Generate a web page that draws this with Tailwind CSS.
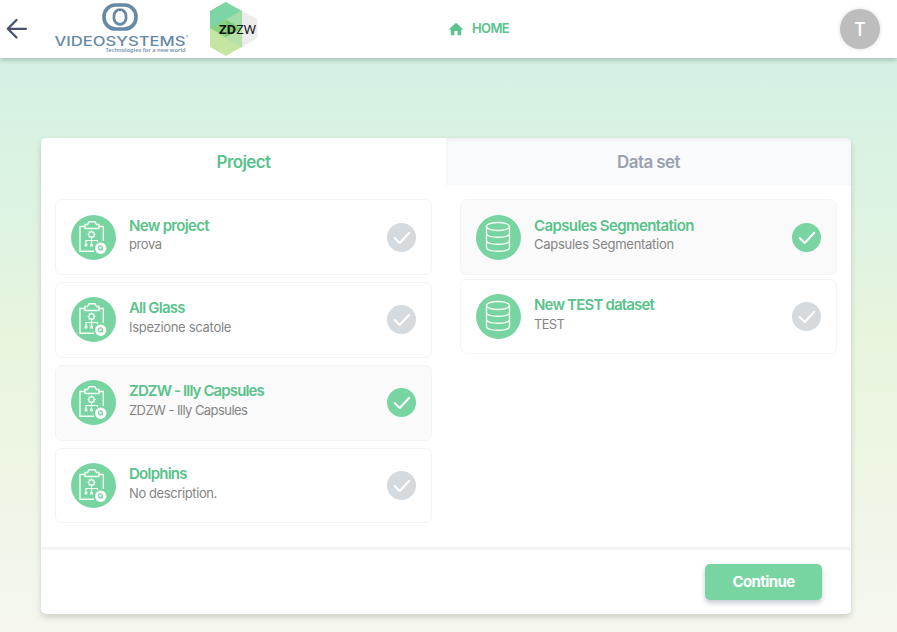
<!DOCTYPE html>
<html lang="en">
<head>
<meta charset="utf-8">
<title>Projects</title>
<script src="https://cdn.jsdelivr.net/npm/@tailwindcss/browser@4"></script>
</head>
<body class="h-[632px] overflow-hidden bg-[linear-gradient(180deg,#d4f1e3_50px,#dcf3e2_190px,#e8f5df_340px,#eef6e4_460px,#f1f6ea_550px,#f5f7ee_632px)] font-['Inter','Liberation_Sans',sans-serif]">
<svg class="hidden">
  <symbol id="clip" viewBox="0 0 45 45">
    <circle cx="22.5" cy="22.5" r="22.5" fill="#78d4a1"/>
    <g fill="none" stroke="#f3fff5" stroke-width="1.4">
      <path d="M14 11.500H9V36.300H23M27 11.500H32.300V26"/>
      <path d="M14 13.500V9.500H16.500L18 6.800H24L25.500 9.500H28V13.500Z"/>
      <circle cx="20.500" cy="19.500" r="2.700" stroke-width="1.300"/>
      <path d="M20.500 15.500V17M20.500 22V30M16.500 19.500H18M23 19.500H24.500M17.700 16.700L18.700 17.700M23.300 16.700L22.300 17.700M17.700 22.300L18.700 21.300M23.300 22.300L22.300 21.300M15 30V25.500H26.500V27" stroke-width="1.200"/>
    </g>
    <path d="M13.600 28.800H16.400V31.500H13.600ZM19.200 28.800H22V31.500H19.200Z" fill="#f3fff5"/>
    <circle cx="29.700" cy="33.200" r="5.700" fill="#fff"/>
    <circle cx="29.500" cy="32.800" r="2" fill="none" stroke="#78d4a1" stroke-width="1.200"/>
    <path d="M30.500 33.500L32 35.300" stroke="#78d4a1" stroke-width="1.200"/>
  </symbol>
  <symbol id="db" viewBox="0 0 45 45">
    <circle cx="22.500" cy="22.500" r="22.500" fill="#78d4a1"/>
    <g fill="none" stroke="#f3fff5" stroke-width="1.300">
      <ellipse cx="22" cy="11.500" rx="11.500" ry="4"/>
      <path d="M10.500 11.500V32.500C10.500 37.500 33.500 37.500 33.500 32.500V11.500M10.500 18.500C10.500 23.500 33.500 23.500 33.500 18.500M10.500 25.500C10.500 30.500 33.500 30.500 33.500 25.500"/>
    </g>
  </symbol>
  <symbol id="tick" viewBox="0 0 29 29">
    <circle cx="14.500" cy="14.500" r="14.500" fill="currentColor"/>
    <path d="M7.700 15L12.700 20L22.300 9.700" fill="none" stroke="#fff" stroke-width="2" stroke-linecap="round" stroke-linejoin="round"/>
  </symbol>
</svg>
<header class="relative flex h-[58px] items-start bg-white shadow-[0_2px_5px_rgba(0,0,0,0.22)]">
  <svg class="ml-[6px] mt-[18px] size-[22px]" viewBox="0 0 22 22" fill="none" stroke="#47526a" stroke-width="2.300" stroke-linecap="round" stroke-linejoin="round"><path d="M20 10.800H2M10.500 2L1.800 10.800L10.500 19.500"/></svg>
  <svg class="ml-[24px] h-[58px] w-[140px] overflow-visible" viewBox="52 0 140 58">
    <rect x="104" y="5" width="32" height="24" rx="11.500" fill="none" stroke="#6689a5" stroke-width="3.600"/>
    <rect x="114" y="9.700" width="12" height="14.600" rx="6" fill="none" stroke="#6689a5" stroke-width="2.800"/>
    <text x="54.500" y="45.800" font-family="Inter" font-size="12.500" font-weight="500" fill="#6689a5" textLength="131" lengthAdjust="spacingAndGlyphs">VIDEOSYSTEMS</text>
    <text x="186" y="38" font-family="Inter" font-size="3" fill="#6689a5">®</text>
    <text x="105.500" y="52.300" font-family="Noto Sans" font-size="6" font-weight="600" fill="#7893ac" textLength="80" lengthAdjust="spacingAndGlyphs">Technologies for a new world</text>
  </svg>
  <svg class="ml-[16px] h-[58px] w-[52px]" viewBox="208 0 52 58">
    <path d="M241.500 10.500L257.300 19.500V38L241.500 47.500L225.500 38V19.500Z" fill="#ececec"/>
    <path d="M225.800 2L241.700 11V47L225.800 56L210 47V11Z" fill="#c5e6a2"/>
    <path d="M225.800 2L241.700 11V38L210 28V11Z" fill="#7bd5a5"/>
    <path d="M210 28L225.800 19.500V37.500Z" fill="#88d283"/>
    <path d="M225.800 19.500L241.700 10.500V47L225.800 38Z" fill="#a4dda8"/>
    <path d="M225.800 19.500L241.700 28.500L225.800 37.500Z" fill="#7ecb76"/>
    <path d="M225.800 37.500L241.700 28.500V47Z" fill="#b8e1a8"/>
    <text x="219" y="33.500" font-family="Noto Sans" font-size="13" fill="#111" textLength="37" lengthAdjust="spacingAndGlyphs"><tspan font-weight="700">ZD</tspan>ZW</text>
  </svg>
  <div class="ml-[188px] mt-[20px] flex h-[18px] items-center text-[#5ac28c]">
    <svg class="h-[14px] w-[16px]" viewBox="0 0 16 14" fill="currentColor"><path d="M8 .8L15.300 7.500H13.200V13.300H9.600V9H6.400V13.300H2.800V7.500H.7Z"/></svg>
    <span class="ml-[8px] text-[13px] font-semibold tracking-[-0.65px]">HOME</span>
  </div>
  <div class="ml-auto mr-[17px] mt-[9px] flex size-[40px] items-center justify-center rounded-full bg-[#bdbdbd] text-[18px] font-medium text-white shadow-[0_0_4px_rgba(0,0,0,0.15)]">T</div>
</header>
<main class="ml-[41px] mt-[80px] flex h-[476px] w-[810px] flex-col overflow-hidden rounded-[5px] bg-white shadow-[0_3px_6px_rgba(0,0,0,0.16)]">
  <div class="flex h-[47px] shrink-0 text-center text-[17px] font-semibold leading-[48px] tracking-[-0.6px]">
    <div class="w-[405px] text-[#5ac28c]">Project</div>
    <div class="w-[405px] bg-[#f8fafc] text-[#9ba1b0] shadow-[inset_0_2px_4px_rgba(0,0,0,0.05)]">Data set</div>
  </div>
  <div class="flex h-[362px] gap-[28px] px-[14px] pt-[14px]">
    <section class="flex w-[377px] flex-col gap-[7px]">
      <article class="flex h-[76px] items-center rounded-[7px] border border-[#f3f4f6] px-[15px]">
        <svg class="size-[45px]"><use href="#clip"/></svg>
        <div class="ml-[13px] flex-1 pb-[6px]"><h2 class="text-[15px] font-semibold leading-[19px] tracking-[-0.68px] text-[#5ac28c]">New project</h2><p class="text-[13px] leading-[18px] tracking-[-0.4px] text-[#858585]">prova</p></div>
        <svg class="size-[29px] text-[#d5dade]"><use href="#tick"/></svg>
      </article>
      <article class="flex h-[76px] items-center rounded-[7px] border border-[#f3f4f6] px-[15px] pb-[2px]">
        <svg class="size-[45px]"><use href="#clip"/></svg>
        <div class="ml-[13px] flex-1 pb-[2px]"><h2 class="text-[15px] font-semibold leading-[19px] tracking-[-0.8px] text-[#5ac28c]">All Glass</h2><p class="text-[13px] leading-[21px] tracking-[-0.3px] text-[#858585]">Ispezione scatole</p></div>
        <svg class="size-[29px] text-[#d5dade]"><use href="#tick"/></svg>
      </article>
      <article class="flex h-[76px] items-center rounded-[7px] border border-[#f3f4f6] bg-[#fafafa] px-[15px] pb-[2px]">
        <svg class="size-[45px]"><use href="#clip"/></svg>
        <div class="ml-[13px] flex-1 pb-[2px]"><h2 class="text-[15px] font-semibold leading-[19px] tracking-[-0.88px] text-[#5ac28c]">ZDZW - Illy Capsules</h2><p class="text-[13px] leading-[21px] tracking-[-0.56px] text-[#858585]">ZDZW - Illy Capsules</p></div>
        <svg class="size-[29px] text-[#78d4a1]"><use href="#tick"/></svg>
      </article>
      <article class="flex h-[75px] items-center rounded-[7px] border border-[#f3f4f6] px-[15px]">
        <svg class="size-[45px]"><use href="#clip"/></svg>
        <div class="ml-[13px] flex-1 pb-[4px]"><h2 class="text-[15px] font-semibold leading-[19px] tracking-[-0.75px] text-[#5ac28c]">Dolphins</h2><p class="text-[13px] leading-[21px] tracking-[-0.4px] text-[#858585]">No description.</p></div>
        <svg class="size-[29px] text-[#d5dade]"><use href="#tick"/></svg>
      </article>
    </section>
    <section class="flex w-[377px] flex-col gap-[4px]">
      <article class="flex h-[76px] items-center rounded-[7px] border border-[#f3f4f6] bg-[#fafafa] px-[15px]">
        <svg class="size-[45px]"><use href="#db"/></svg>
        <div class="ml-[13px] flex-1 pb-[6px]"><h2 class="text-[15px] font-semibold leading-[19px] tracking-[-0.6px] text-[#5ac28c]">Capsules Segmentation</h2><p class="text-[13px] leading-[18px] tracking-[-0.27px] text-[#858585]">Capsules Segmentation</p></div>
        <svg class="size-[29px] text-[#78d4a1]"><use href="#tick"/></svg>
      </article>
      <article class="flex h-[75px] items-center rounded-[7px] border border-[#f3f4f6] px-[15px]">
        <svg class="size-[45px]"><use href="#db"/></svg>
        <div class="ml-[13px] flex-1 pb-[4px]"><h2 class="text-[15px] font-semibold leading-[19px] tracking-[-0.82px] text-[#5ac28c]">New TEST dataset</h2><p class="text-[13px] leading-[21px] tracking-[-0.7px] text-[#858585]">TEST</p></div>
        <svg class="size-[29px] text-[#d5dade]"><use href="#tick"/></svg>
      </article>
    </section>
  </div>
  <footer class="flex flex-1 justify-end border-t-[3px] border-[#f4f5f7] pr-[29px] pt-[14px]">
    <button class="h-[36px] w-[117px] rounded-[5px] bg-[#78d4a1] text-[15px] font-bold tracking-[-0.6px] text-white shadow-[0_3px_5px_rgba(70,80,110,0.3)]">Continue</button>
  </footer>
</main>
</body>
</html>
